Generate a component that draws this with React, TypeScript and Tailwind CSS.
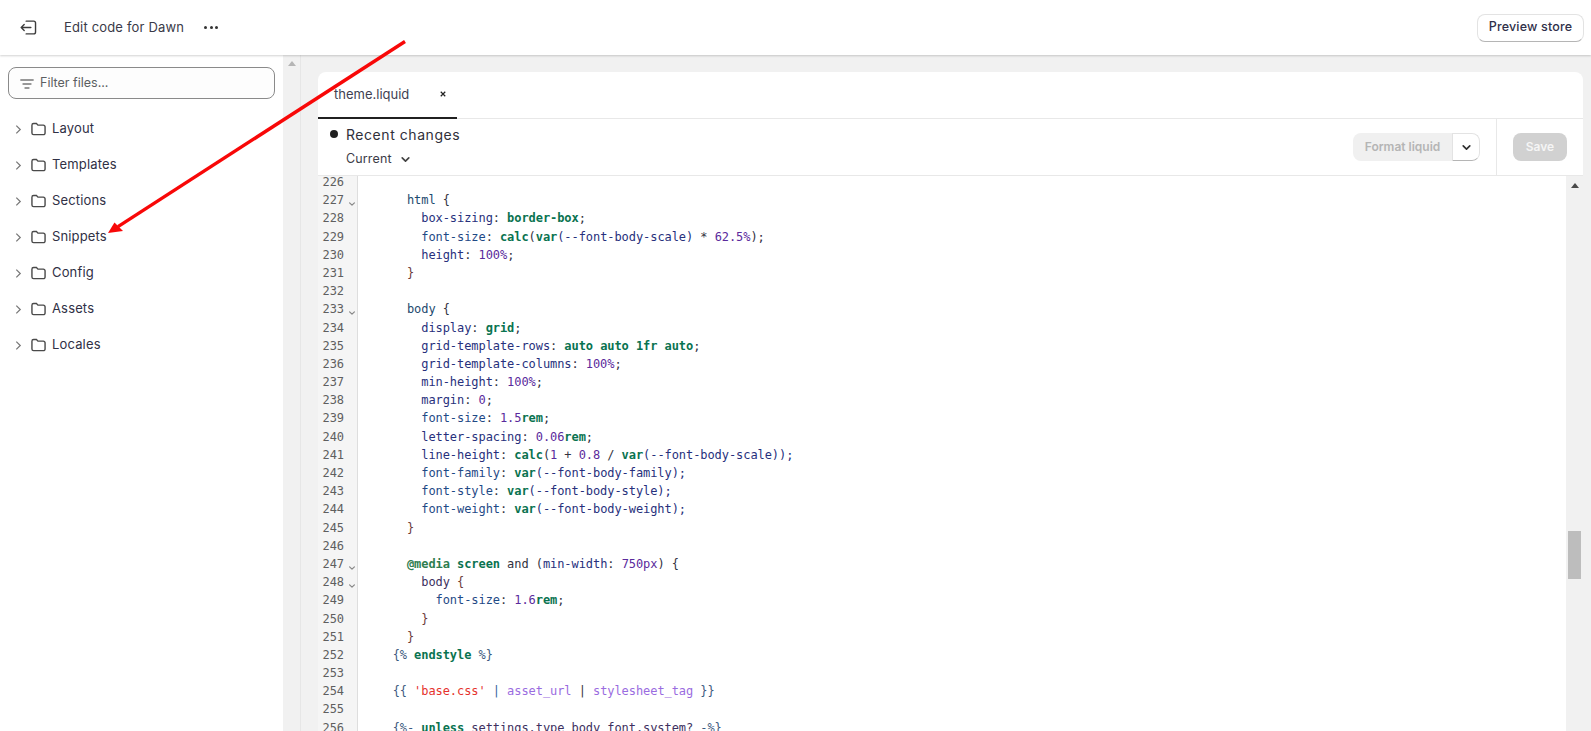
import React from "react";

type Tok = [string, string?];
const P = "text-[#27307c]";
const K = "text-[#0a7350] font-bold";
const N = "text-[#5a2a9c]";
const D = "text-[#33333f]";
const R = "text-[#e5322d]";
const F = "text-[#9a6ce0]";
const B = "text-[#2f5f9e]";
const V = "text-[#27307c]";

const lines: { n: number; fold?: boolean; t: Tok[] }[] = [
  { n: 226, t: [] },
  { n: 227, fold: true, t: [["      "], ["html", "text-[#1d4a6e]"], [" {", D]] },
  { n: 228, t: [["        "], ["box-sizing", P], [": ", D], ["border-box", K], [";", D]] },
  { n: 229, t: [["        "], ["font-size", "text-[#1f4a86]"], [": ", D], ["calc", K], ["(", D], ["var", K], ["(--font-body-scale) ", V], ["* ", D], ["62.5%", N], [");", D]] },
  { n: 230, t: [["        "], ["height", P], [": ", D], ["100%", N], [";", D]] },
  { n: 231, t: [["      "], ["}", "text-[#6b3a3a]"]] },
  { n: 232, t: [] },
  { n: 233, fold: true, t: [["      "], ["body", "text-[#1d4a6e]"], [" {", D]] },
  { n: 234, t: [["        "], ["display", P], [": ", D], ["grid", K], [";", D]] },
  { n: 235, t: [["        "], ["grid-template-rows", P], [": ", D], ["auto auto 1fr auto", K], [";", D]] },
  { n: 236, t: [["        "], ["grid-template-columns", P], [": ", D], ["100%", N], [";", D]] },
  { n: 237, t: [["        "], ["min-height", P], [": ", D], ["100%", N], [";", D]] },
  { n: 238, t: [["        "], ["margin", P], [": ", D], ["0", N], [";", D]] },
  { n: 239, t: [["        "], ["font-size", "text-[#1f4a86]"], [": ", D], ["1.5", N], ["rem", K], [";", D]] },
  { n: 240, t: [["        "], ["letter-spacing", P], [": ", D], ["0.06", N], ["rem", K], [";", D]] },
  { n: 241, t: [["        "], ["line-height", P], [": ", D], ["calc", K], ["(", D], ["1", N], [" + ", D], ["0.8", N], [" / ", D], ["var", K], ["(--font-body-scale));", V]] },
  { n: 242, t: [["        "], ["font-family", "text-[#1f4a86]"], [": ", D], ["var", K], ["(--font-body-family);", V]] },
  { n: 243, t: [["        "], ["font-style", "text-[#1f4a86]"], [": ", D], ["var", K], ["(--font-body-style);", V]] },
  { n: 244, t: [["        "], ["font-weight", "text-[#1f4a86]"], [": ", D], ["var", K], ["(--font-body-weight);", V]] },
  { n: 245, t: [["      "], ["}", "text-[#6b3a3a]"]] },
  { n: 246, t: [] },
  { n: 247, fold: true, t: [["      "], ["@media", "text-[#2e7d4f] font-bold"], [" "], ["screen", K], [" and (", D], ["min-width", P], [": ", D], ["750px", N], [") {", D]] },
  { n: 248, fold: true, t: [["        "], ["body", "text-[#3d3060]"], [" {", "text-[#6b3a3a]"]] },
  { n: 249, t: [["          "], ["font-size", "text-[#1f4a86]"], [": ", D], ["1.6", N], ["rem", K], [";", D]] },
  { n: 250, t: [["        "], ["}", "text-[#6b3a3a]"]] },
  { n: 251, t: [["      "], ["}", "text-[#6b3a3a]"]] },
  { n: 252, t: [["    "], ["{%", "text-[#3d5a80]"], [" "], ["endstyle", K], [" %}", "text-[#3d5a80]"]] },
  { n: 253, t: [] },
  { n: 254, t: [["    "], ["{{", "text-[#3d5a80]"], [" "], ["'base.css'", R], [" "], ["|", B], [" "], ["asset_url", F], [" "], ["|", "text-[#333]"], [" "], ["stylesheet_tag", F], [" }}", "text-[#3d5a80]"]] },
  { n: 255, t: [] },
  { n: 256, t: [["    "], ["{%-", "text-[#3d5a80]"], [" "], ["unless", K], [" settings.type_body_font.system? ", "text-[#3d3060]"], ["-%}", "text-[#3d5a80]"]] },
];

const folders = ["Layout", "Templates", "Sections", "Snippets", "Config", "Assets", "Locales"];

function Chevron({ className }: { className: string }) {
  return (
    <svg viewBox="0 0 10 10" className={className} fill="none" stroke="currentColor" strokeWidth="1.5" strokeLinecap="round" strokeLinejoin="round">
      <path d="M2 3.5 5 6.5 8 3.5" />
    </svg>
  );
}

function FolderRow({ name }: { name: string }) {
  return (
    <div className="flex h-[36px] items-center pl-[15px] text-[13px] tracking-[0.15px] text-[#303045]">
      <svg viewBox="0 0 8 12" className="h-[11px] w-[7px] text-[#777]" fill="none" stroke="currentColor" strokeWidth="1.4">
        <path d="M1.5 1.5 6 6 1.5 10.5" />
      </svg>
      <svg viewBox="0 0 16 14" className="ml-[9px] h-[14px] w-[15px] text-[#4a4a4a]" fill="none" stroke="currentColor" strokeWidth="1.5">
        <path d="M1 3a1.8 1.8 0 0 1 1.8-1.8h3l1.6 1.7h5.8A1.8 1.8 0 0 1 15 4.7v6.5a1.8 1.8 0 0 1-1.8 1.8H2.8A1.8 1.8 0 0 1 1 11.2z" />
      </svg>
      <span className="ml-[6px]">{name}</span>
    </div>
  );
}

export default function App() {
  return (
    <div className="relative flex h-[731px] w-[1591px] flex-col overflow-hidden bg-[#f1f1f1] font-['Inter',sans-serif]">
      {/* Top bar */}
      <header className="z-10 flex h-[55px] shrink-0 items-center justify-between bg-white pl-[20px] pr-[7px] shadow-[0_1px_2px_rgba(0,0,0,0.18)]">
        <div className="flex items-center">
          <svg viewBox="0 0 18 16" className="h-[15px] w-[17px] text-[#3c3c3c]" fill="none" stroke="currentColor" strokeWidth="1.5" strokeLinecap="round" strokeLinejoin="round">
            <path d="M6.5 1.2h8a2 2 0 0 1 2 2v9.6a2 2 0 0 1-2 2h-8" />
            <path d="M11.5 8H1.2M4.4 4.8 1.2 8l3.2 3.2" />
          </svg>
          <span className="ml-[27px] text-[13px] tracking-[0.17px] text-[#3a3a48]">Edit code for Dawn</span>
          <span className="ml-[20px] flex items-center gap-[2.5px]">
            <i className="h-[3px] w-[3px] rounded-full bg-[#333]" />
            <i className="h-[3px] w-[3px] rounded-full bg-[#333]" />
            <i className="h-[3px] w-[3px] rounded-full bg-[#333]" />
          </span>
        </div>
        <button className="flex h-[28px] w-[107px] items-center justify-center rounded-[8px] border border-[#e3e3e3] border-b-[#b5b5b5] bg-white text-[12.5px] font-medium tracking-[0.16px] text-[#30304a]">
          Preview store
        </button>
      </header>

      <div className="flex min-h-0 flex-1">
        {/* Sidebar */}
        <aside className="flex w-[283px] shrink-0 flex-col bg-white pl-[8px] pr-[8px] pt-[12px]">
          <div className="flex h-[32px] items-center rounded-[8px] border border-[#8a8a8a] bg-[#fdfdfd] pl-[11px] pt-[1px] text-[12.5px] text-[#5c5f62]">
            <svg viewBox="0 0 14 10" className="h-[10px] w-[14px] text-[#777]" fill="none" stroke="currentColor" strokeWidth="1.3" strokeLinecap="round">
              <path d="M.8 1h12.4M3 5h8M5 9h4" />
            </svg>
            <span className="ml-[6px]">Filter files...</span>
          </div>
          <div className="-ml-[8px] mt-[12px] flex flex-col">
            {folders.map((f) => (
              <FolderRow key={f} name={f} />
            ))}
          </div>
        </aside>

        {/* Sidebar scrollbar */}
        <div className="flex w-[18px] shrink-0 justify-center border-r border-[#e6e6e6] bg-[#f1f1f1] pt-[6px]">
          <div className="h-0 w-0 border-x-[4px] border-b-[5px] border-x-transparent border-b-[#b5b5b5]" />
        </div>

        {/* Main */}
        <main className="flex min-w-0 flex-1 flex-col pl-[17px] pr-[8px] pt-[17px]">
          <section className="flex min-h-0 flex-1 flex-col overflow-hidden rounded-t-[8px] bg-white">
            {/* Tabs */}
            <div className="flex h-[47px] shrink-0 border-b border-[#e8e8e8]">
              <div className="-mb-px flex w-[139px] items-center border-b-[2px] border-[#202020] pl-[16px] text-[13px] text-[#3f3f52]">
                <span>theme.liquid</span>
                <svg viewBox="0 0 8 8" className="ml-[31px] mb-[1px] h-[6px] w-[6px] text-[#222]" fill="none" stroke="currentColor" strokeWidth="1.6">
                  <path d="M1 1l6 6M7 1 1 7" />
                </svg>
              </div>
            </div>

            {/* Toolbar */}
            <div className="flex h-[57px] shrink-0 border-b border-[#e8e8e8]">
              <div className="flex-1 pl-[12px] pt-[6px]">
                <div className="flex h-[18px] items-center">
                  <i className="h-[8px] w-[8px] rounded-full bg-[#202020]" />
                  <span className="ml-[8px] text-[14px] tracking-[0.55px] text-[#30303a]">Recent changes</span>
                </div>
                <div className="mt-[7px] flex items-center pl-[16px] text-[12.5px] tracking-[0.15px] text-[#3c3c48]">
                  <span>Current</span>
                  <Chevron className="ml-[8px] h-[11px] w-[11px] text-[#444]" />
                </div>
              </div>
              <div className="flex items-center pr-[16px]">
                <div className="flex h-[28px] w-[127px] items-center overflow-hidden rounded-[8px] bg-[#f0f0f0]">
                  <span className="flex-1 text-center text-[12px] font-semibold text-[#b5b5b5]">Format liquid</span>
                  <span className="flex h-[28px] w-[28px] items-center justify-center rounded-r-[8px] border border-[#e3e3e3] border-b-[#b5b5b5] bg-white">
                    <Chevron className="h-[11px] w-[11px] text-[#303030]" />
                  </span>
                </div>
              </div>
              <div className="flex w-[87px] items-center justify-center border-l border-[#e8e8e8]">
                <span className="flex h-[28px] w-[54px] items-center justify-center rounded-[8px] bg-[#d1d1d1] text-[12px] font-semibold text-[#f5f5f5]">Save</span>
              </div>
            </div>

            {/* Editor */}
            <div className="flex min-h-0 flex-1">
              <div className="min-w-0 flex-1 overflow-hidden bg-[linear-gradient(to_right,#f5f5f5_39px,#dedede_39px,#dedede_40px,transparent_40px)] font-['DejaVu_Sans_Mono',monospace] text-[12px] tracking-[-0.07px] leading-[18.2px]">
                <div className="-mt-[3px]">
                  {lines.map((l) => (
                    <div key={l.n} className="flex h-[18.2px]">
                      <div className="flex w-[40px] shrink-0 text-[#5f5f5f]">
                        <span className="w-[26px] text-right">{l.n}</span>
                        {l.fold && <Chevron className="ml-[4px] mt-[9px] h-[8px] w-[8px] text-[#888]" />}
                      </div>
                      <div className="whitespace-pre pl-[6px]">
                        {l.t.map((t, i) => (
                          <span key={i} className={t[1]}>
                            {t[0]}
                          </span>
                        ))}
                      </div>
                    </div>
                  ))}
                </div>
              </div>
              {/* Editor scrollbar */}
              <div className="flex w-[17px] shrink-0 flex-col items-center bg-[#f1f1f1] pt-[7px]">
                <div className="h-0 w-0 border-x-[4px] border-b-[5px] border-x-transparent border-b-[#4a4a4a]" />
                <div className="mt-[343px] h-[48px] w-[13px] bg-[#bdbdbd]" />
              </div>
            </div>
          </section>
        </main>
      </div>

      {/* Annotation arrow */}
      <svg className="pointer-events-none absolute left-0 top-0 z-20 h-[731px] w-[1591px]" viewBox="0 0 1591 731" fill="none">
        <line x1="405" y1="41.5" x2="118" y2="226.6" stroke="#f80808" strokeWidth="3.4" />
        <polygon points="108,233 114.5,222.5 123,231" fill="#f80808" />
      </svg>
    </div>
  );
}
